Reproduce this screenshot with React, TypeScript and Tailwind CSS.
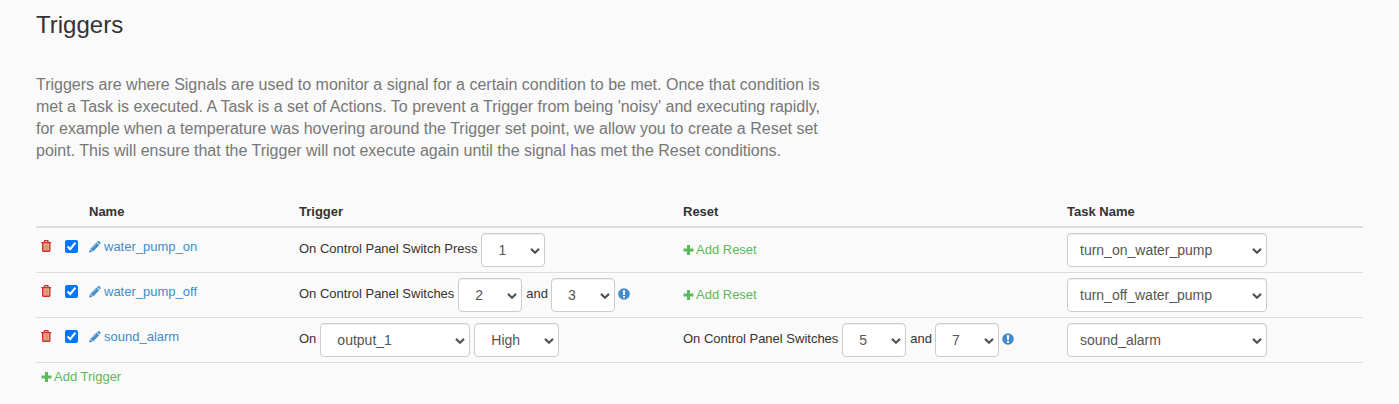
import { useState } from "react";
import type { ReactNode } from "react";

type Trigger = {
  name: string;
  trigger: ReactNode;
  reset: ReactNode;
  task: string;
};

const SWITCHES = ["1", "2", "3", "4", "5", "6", "7", "8"];
const OUTPUTS = ["output_1", "output_2", "output_3"];
const TASKS = ["turn_on_water_pump", "turn_off_water_pump", "sound_alarm"];

const TRIGGERS: Trigger[] = [
  {
    name: "water_pump_on",
    trigger: (
      <>
        <Label text="On Control Panel Switch Press" />
        <SwitchSelect label="Switch" value="1" />
      </>
    ),
    reset: <AddLink text="Add Reset" />,
    task: "turn_on_water_pump",
  },
  {
    name: "water_pump_off",
    trigger: <SwitchPair first="2" second="3" />,
    reset: <AddLink text="Add Reset" />,
    task: "turn_off_water_pump",
  },
  {
    name: "sound_alarm",
    trigger: (
      <>
        <Label text="On" />
        <Select
          label="Signal"
          value="output_1"
          options={OUTPUTS}
          className="w-[150px] px-4"
        />
        <Select
          label="Signal state"
          value="High"
          options={["High", "Low"]}
          className="w-[85px] px-4"
        />
      </>
    ),
    reset: <SwitchPair first="5" second="7" />,
    task: "sound_alarm",
  },
];

export default function App() {
  return (
    <main className="min-h-screen bg-[#fafafa] px-9 pt-3 pb-4 font-['Liberation_Sans',Arial,sans-serif] text-[13px]/[18px] text-[#333]">
      <h1 className="text-2xl/[26px]">Triggers</h1>
      <p className="mt-9 max-w-[800px] text-base/[22px] text-[#777]">
        Triggers are where Signals are used to monitor a signal for a certain
        condition to be met. Once that condition is met a Task is executed. A
        Task is a set of Actions. To prevent a Trigger from being 'noisy' and
        executing rapidly, for example when a temperature was hovering around
        the Trigger set point, we allow you to create a Reset set point. This
        will ensure that the Trigger will not execute again until the signal has
        met the Reset conditions.
      </p>
      <table className="mt-9 w-full table-fixed border-collapse text-left">
        <colgroup>
          <col className="w-6" />
          <col className="w-6" />
          <col className="w-[210px]" />
          <col className="w-[384px]" />
          <col className="w-[384px]" />
          <col />
        </colgroup>
        <thead>
          <tr className="border-b-2 border-[#ddd]">
            <td />
            <td />
            <th className="p-[5px]">Name</th>
            <th className="p-[5px]">Trigger</th>
            <th className="p-[5px]">Reset</th>
            <th className="p-[5px]">Task Name</th>
          </tr>
        </thead>
        <tbody>
          {TRIGGERS.map((trigger) => (
            <TriggerRow key={trigger.name} trigger={trigger} />
          ))}
        </tbody>
      </table>
      <div className="p-[5px]">
        <AddLink text="Add Trigger" />
      </div>
    </main>
  );
}

function TriggerRow({ trigger }: { trigger: Trigger }) {
  const [enabled, setEnabled] = useState(true);

  return (
    <tr className="border-b border-[#ddd] align-top">
      <td className="px-[5px] py-3">
        <button
          type="button"
          aria-label={`Delete ${trigger.name}`}
          className="block cursor-pointer text-[#c9302c]"
        >
          <TrashIcon />
        </button>
      </td>
      <td className="px-[5px] py-3">
        <input
          type="checkbox"
          aria-label={`Enable ${trigger.name}`}
          className="block size-[13px]"
          checked={enabled}
          onChange={(e) => setEnabled(e.target.checked)}
        />
      </td>
      <td className="px-[5px] py-[10px]">
        <a href="#" className="flex items-center gap-[3px] text-[#428bca]">
          <PencilIcon />
          {trigger.name}
        </a>
      </td>
      <td className="p-[5px]">
        <div className="flex h-[34px] items-center gap-1">
          {trigger.trigger}
        </div>
      </td>
      <td className="p-[5px]">
        <div className="flex h-[34px] items-center gap-1">{trigger.reset}</div>
      </td>
      <td className="p-[5px]">
        <Select
          label={`Task for ${trigger.name}`}
          value={trigger.task}
          options={TASKS}
          className="w-[200px] px-3"
        />
      </td>
    </tr>
  );
}

function Label({ text }: { text: string }) {
  return <span className="pb-[2px]">{text}</span>;
}

function SwitchPair({ first, second }: { first: string; second: string }) {
  return (
    <>
      <Label text="On Control Panel Switches" />
      <SwitchSelect label="First switch" value={first} />
      <span className="flex items-center gap-[3px]">
        <Label text="and" />
        <SwitchSelect label="Second switch" value={second} />
        <InfoIcon />
      </span>
    </>
  );
}

function SwitchSelect({ label, value }: { label: string; value: string }) {
  return (
    <Select
      label={label}
      value={value}
      options={SWITCHES}
      className="w-16 px-4"
    />
  );
}

function Select({
  label,
  value,
  options,
  className,
}: {
  label: string;
  value: string;
  options: string[];
  className: string;
}) {
  return (
    <span className="relative inline-block align-top">
      <select
        aria-label={label}
        defaultValue={value}
        className={`block h-[34px] appearance-none rounded border border-[#ccc] bg-white text-sm text-[#555] shadow-[inset_0_1px_1px_rgba(0,0,0,0.075)] ${className}`}
      >
        {options.map((option) => (
          <option key={option}>{option}</option>
        ))}
      </select>
      <svg
        viewBox="0 0 10 6"
        className="pointer-events-none absolute top-[15px] right-[5px] h-[6px] w-[10px]"
      >
        <path
          d="M1 .9l4 3.800L9 .9"
          fill="none"
          stroke="#555"
          strokeWidth="2.200"
        />
      </svg>
    </span>
  );
}

function AddLink({ text }: { text: string }) {
  return (
    <a href="#" className="flex items-center gap-[2px] text-[#5cb85c]">
      <PlusIcon />
      {text}
    </a>
  );
}

function PlusIcon() {
  return (
    <svg viewBox="0 0 11 12" className="h-3 w-[11px] fill-current">
      <path d="M4 1h3v3.500h3.500v3H7V11H4V7.500H.5v-3H4z" />
    </svg>
  );
}

function TrashIcon() {
  return (
    <svg viewBox="0 0 11 12" className="h-3 w-[11px]">
      <path d="M2 3h6.500v8H2z" fill="#e8b48c" />
      <path
        d="M3.500 2.200V1.100q0-.5.5-.5h2.500q.5 0 .5.5v1.100M.3 2.600h9.900M1.700 3v7.400q0 .9.900.9h5.300q.9 0 .9-.9V3"
        fill="none"
        stroke="currentColor"
        strokeWidth="1.400"
      />
      <path
        d="M3.900 4.200v5.600M5.250 4.200v5.600M6.600 4.200v5.600"
        stroke="currentColor"
        strokeOpacity=".5"
        strokeWidth=".6"
      />
    </svg>
  );
}

function PencilIcon() {
  return (
    <svg viewBox="0 0 12 12" className="size-3 fill-current">
      <path d="M8.100 1 9 .3q.6-.5 1.200 0l1.200 1.200q.5.6 0 1.200l-.8.9zM7.500 1.500l2.700 2.700-6.200 6.200-2.700-2.700zM.9 8.200l2.500 2.500L0 11.500z" />
      <path d="M2.700 7.600 7.400 2.900" stroke="#fafafa" strokeWidth=".5" />
    </svg>
  );
}

function InfoIcon() {
  return (
    <svg viewBox="0 0 12 14" className="h-[14px] w-3">
      <circle cx="6" cy="6" r="5.800" fill="#428bca" />
      <path d="M4.800 2.200h2.400L6.900 7H5.100zM5 8h2v1.800H5z" fill="#fff" />
    </svg>
  );
}
